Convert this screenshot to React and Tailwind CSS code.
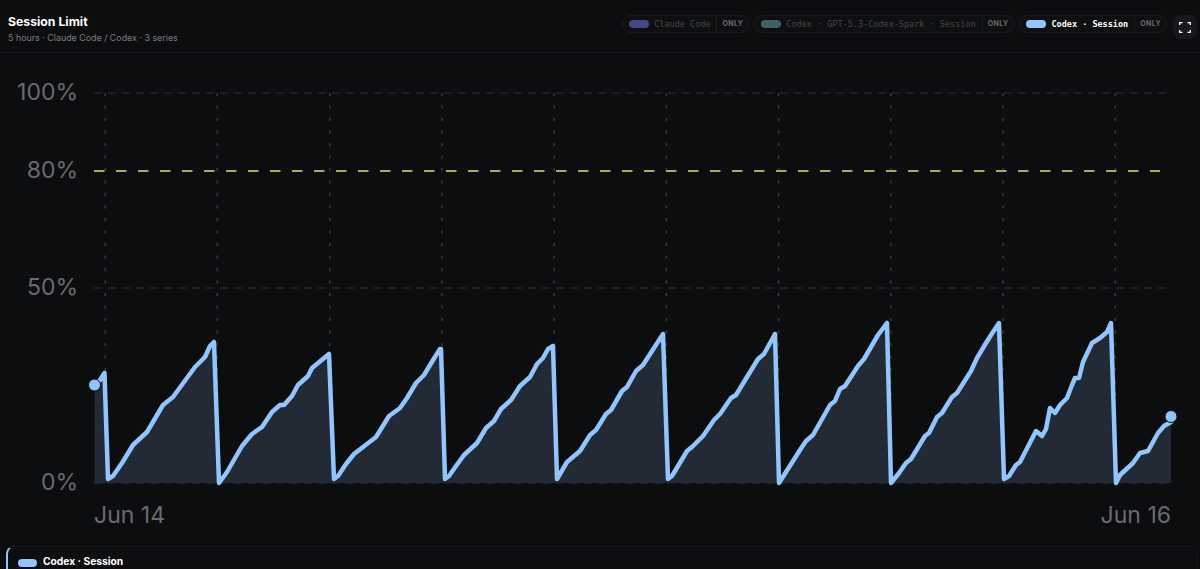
import React from 'react';

const points = [
  [94.5, 385], [100, 380], [104.5, 373], [108, 479], [113, 476], [122, 463], [133, 445], [147, 432], [163, 405], [173, 397],
  [195, 367], [205, 357], [210, 346], [214, 342], [219, 483], [227, 472], [242, 446], [252, 434], [262, 427], [272, 412],
  [280, 405], [284, 405], [292, 396], [298, 385], [308, 376], [312, 368], [329, 354], [334, 479], [338, 476], [346, 464],
  [354, 454], [376, 437], [389, 416], [400, 408], [407, 398], [416, 383], [424, 375], [433, 360], [440, 349], [441, 349],
  [445, 479], [449, 476], [456, 466], [464, 455], [477, 443], [486, 428], [494, 421], [501, 409], [511, 400], [520, 386],
  [530, 377], [537, 364], [543, 358], [548, 349], [553, 346], [557, 479], [567, 462], [580, 451], [590, 435], [596, 430],
  [606, 414], [611, 410], [622, 391], [627, 387], [636, 371], [643, 365], [663, 334], [668, 479], [672, 476], [687, 451],
  [692, 447], [703, 436], [714, 420], [720, 414], [731, 398], [736, 395], [747, 377], [758, 359], [764, 354], [775, 334],
  [779, 483], [800, 450], [806, 441], [813, 435], [830, 405], [835, 401], [840, 389], [845, 386], [858, 366], [864, 359],
  [878, 335], [887, 323], [891, 483], [899, 473], [906, 463], [911, 459], [925, 436], [929, 433], [937, 417], [942, 413],
  [952, 397], [957, 393], [971, 371], [977, 358], [986, 343], [991, 335], [999, 323], [1004, 479], [1009, 476], [1016, 465],
  [1020, 462], [1036, 431], [1042, 436], [1046, 429], [1050, 408], [1055, 413], [1060, 405], [1067, 398], [1072, 385],
  [1075, 378], [1079, 378], [1083, 362], [1092, 343], [1100, 338], [1107, 332], [1111, 323], [1116, 483], [1120, 475],
  [1133, 463], [1140, 453], [1148, 451], [1158, 433], [1164, 426], [1171, 422],
];

const linePath = points.map((p) => p.join(',')).join(' ');
const areaPath = `94.5,483 ${linePath} 1171,483`;
const gridX = [105.3, 217.3, 329.8, 442, 554.2, 666.4, 778.6, 890.8, 1003, 1115.3];
const gridY = [93, 288, 483];
const yLabels = [
  { text: '100%', y: 99.5 },
  { text: '80%', y: 177.5 },
  { text: '50%', y: 294.5 },
  { text: '0%', y: 489.5 },
];

const legend = [
  { name: 'Claude Code', swatch: 'bg-[#45498a]', label: 'text-[#46474b]' },
  { name: 'Codex · GPT-5.3-Codex-Spark · Session', swatch: 'bg-[#3f6163]', label: 'text-[#46474b]' },
  { name: 'Codex · Session', swatch: 'bg-[#93c5fd]', label: 'text-white font-bold' },
];

function LegendChip({ name, swatch, label }) {
  return (
    <div className="flex h-[18px] items-center rounded-full border border-[#1a1b1f] bg-[#0e0f11]">
      <span className={`ml-[6px] h-2 w-5 rounded-full ${swatch}`} />
      <span className={`ml-[5px] pr-[6px] font-['DejaVu_Sans_Mono',monospace] text-[8.5px] ${label}`}>{name}</span>
      <span className="flex h-full items-center border-l border-[#1a1b1f] px-[5px] text-[7px] font-bold tracking-[0.4px] text-[#6b6c70]">
        ONLY
      </span>
    </div>
  );
}

function Chart() {
  return (
    <svg viewBox="0 53 1200 493" className="block h-[493px] w-[1200px] shrink-0">
      {gridY.map((y) => (
        <line key={y} x1="94" x2="1171" y1={y} y2={y} stroke="#313236" strokeWidth="1.2" strokeDasharray="8 6" />
      ))}
      {gridX.map((x) => (
        <line key={x} x1={x} x2={x} y1="93" y2="483" stroke="#3a3b3f" strokeWidth="1.5" strokeDasharray="3 9.5" />
      ))}
      <line x1="94" x2="1160" y1="171" y2="171" stroke="#b5a460" strokeWidth="2" strokeDasharray="10.5 11.5" />
      <polygon points={areaPath} fill="#222a36" />
      <polyline points={linePath} fill="none" stroke="#93c5fd" strokeWidth="4.5" strokeLinejoin="round" strokeLinecap="round" />
      <circle cx="94.5" cy="385" r="6" fill="#93c5fd" stroke="#0c0d0f" strokeWidth="1" />
      <circle cx="1171" cy="416.5" r="6" fill="#93c5fd" stroke="#0c0d0f" strokeWidth="1" />
      {yLabels.map((l) => (
        <text key={l.text} x="78" y={l.y} textAnchor="end" fontSize="23" fill="#6a6b6f" fontFamily="Inter, sans-serif">
          {l.text}
        </text>
      ))}
      <text x="94" y="523" fontSize="23" fill="#6a6b6f" fontFamily="Inter, sans-serif">Jun 14</text>
      <text x="1171" y="523" textAnchor="end" fontSize="23" fill="#6a6b6f" fontFamily="Inter, sans-serif">Jun 16</text>
    </svg>
  );
}

export default function App() {
  return (
    <div className="flex h-[569px] w-[1200px] flex-col overflow-hidden bg-[#0c0d0f] font-['Inter',sans-serif]">
      <header className="flex h-[53px] shrink-0 items-start justify-between border-b border-[#17181c] pl-2 pr-[3px]">
        <div className="pt-[15px]">
          <h1 className="text-[12.25px] leading-[14px] font-bold text-white">Session Limit</h1>
          <p className="mt-[3px] text-[8.9px] leading-3 text-[#7c7d81]">5 hours · Claude Code / Codex · 3 series</p>
        </div>
        <div className="flex items-start gap-[5px] pt-[15px]">
          {legend.map((item) => (
            <LegendChip key={item.name} {...item} />
          ))}
          <button className="ml-[1px] flex h-6 w-6 items-center justify-center rounded-lg bg-[#17181c] text-white">
            <svg width="12" height="11" viewBox="0 0 12 11" fill="none" stroke="currentColor" strokeWidth="1.3">
              <path d="M0.7 3V0.7H3.5M8.5 0.7H11.3V3M11.3 8V10.3H8.5M3.5 10.3H0.7V8" />
            </svg>
          </button>
        </div>
      </header>
      <Chart />
      <div className="ml-[6px] mr-[2px] h-[40px] shrink-0 rounded-t-lg border-t border-r border-[#17181c] border-l-2 border-l-[#93c5fd] bg-[#0d0e10] pt-[7px] pl-[10px]">
        <div className="flex items-center gap-[6px]">
          <span className="mt-[3px] h-2 w-[19px] rounded-full bg-[#93c5fd]" />
          <span className="text-[10.25px] leading-[14px] font-bold text-white">Codex · Session</span>
        </div>
      </div>
    </div>
  );
}
